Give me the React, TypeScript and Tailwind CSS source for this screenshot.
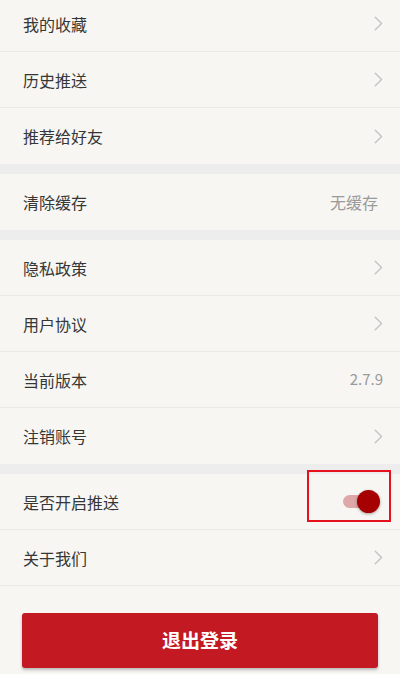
const FONT = { fontFamily: '"Noto Sans CJK SC", "Noto Sans", sans-serif' }

function Chevron() {
  return (
    <svg width="9" height="15" viewBox="0 0 9 15" fill="none" className="shrink-0">
      <path d="M1.2 1.2 L7.6 7.5 L1.2 13.8" stroke="#c2c2c2" strokeWidth="1.3" strokeLinecap="round" strokeLinejoin="round" />
    </svg>
  )
}

function Row({ label, right, last }: { label: string; right?: React.ReactNode; last?: boolean }) {
  return (
    <div className={'flex h-[56px] items-center justify-between pl-[23px] pr-[17px] ' + (last ? '' : 'border-b border-[#ebe9e5]')}>
      <span className="text-[16px] text-[#363636]">{label}</span>
      {right ?? <Chevron />}
    </div>
  )
}

function Toggle() {
  return (
    <div className="relative mr-[3px] h-[23px] w-[37px]">
      <div className="absolute left-0 top-[5px] h-[13px] w-[30px] rounded-full bg-[#dfa8a8]" />
      <div className="absolute right-0 top-0 h-[23px] w-[23px] rounded-full bg-[#a60002] shadow-[0_1px_3px_rgba(0,0,0,0.35)]" />
    </div>
  )
}

export default function App() {
  return (
    <div className="h-[674px] w-[400px] overflow-hidden bg-[#f7f6f3]" style={FONT}>
      <div className="mt-[-4px]">
        <Row label="我的收藏" />
        <Row label="历史推送" />
        <Row label="推荐给好友" last />
      </div>
      <div className="h-[10px] bg-[#ededed]" />
      <Row label="清除缓存" right={<span className="mr-[5px] text-[16px] text-[#9a9a9a]">无缓存</span>} last />
      <div className="h-[10px] bg-[#ededed]" />
      <Row label="隐私政策" />
      <Row label="用户协议" />
      <Row label="当前版本" right={<span className="text-[15px] text-[#9a9a9a]">2.7.9</span>} />
      <Row label="注销账号" last />
      <div className="h-[10px] bg-[#ededed]" />
      <div className="relative flex h-[56px] items-center justify-between border-b border-[#ebe9e5] pl-[23px] pr-[17px]">
        <span className="text-[16px] text-[#363636]">是否开启推送</span>
        <Toggle />
        {/* highlight box */}
        <div className="pointer-events-none absolute left-[307px] top-[-4px] h-[52px] w-[84px] border-2 border-[#e5121d]" />
      </div>
      <Row label="关于我们" />
      <div className="px-[22px] pt-[27px]">
        <button className="flex h-[55px] w-full items-center justify-center rounded-[3px] bg-[#c31922] text-[19px] font-bold text-white shadow-[0_2px_3px_rgba(0,0,0,0.25)]">
          退出登录
        </button>
      </div>
    </div>
  )
}
